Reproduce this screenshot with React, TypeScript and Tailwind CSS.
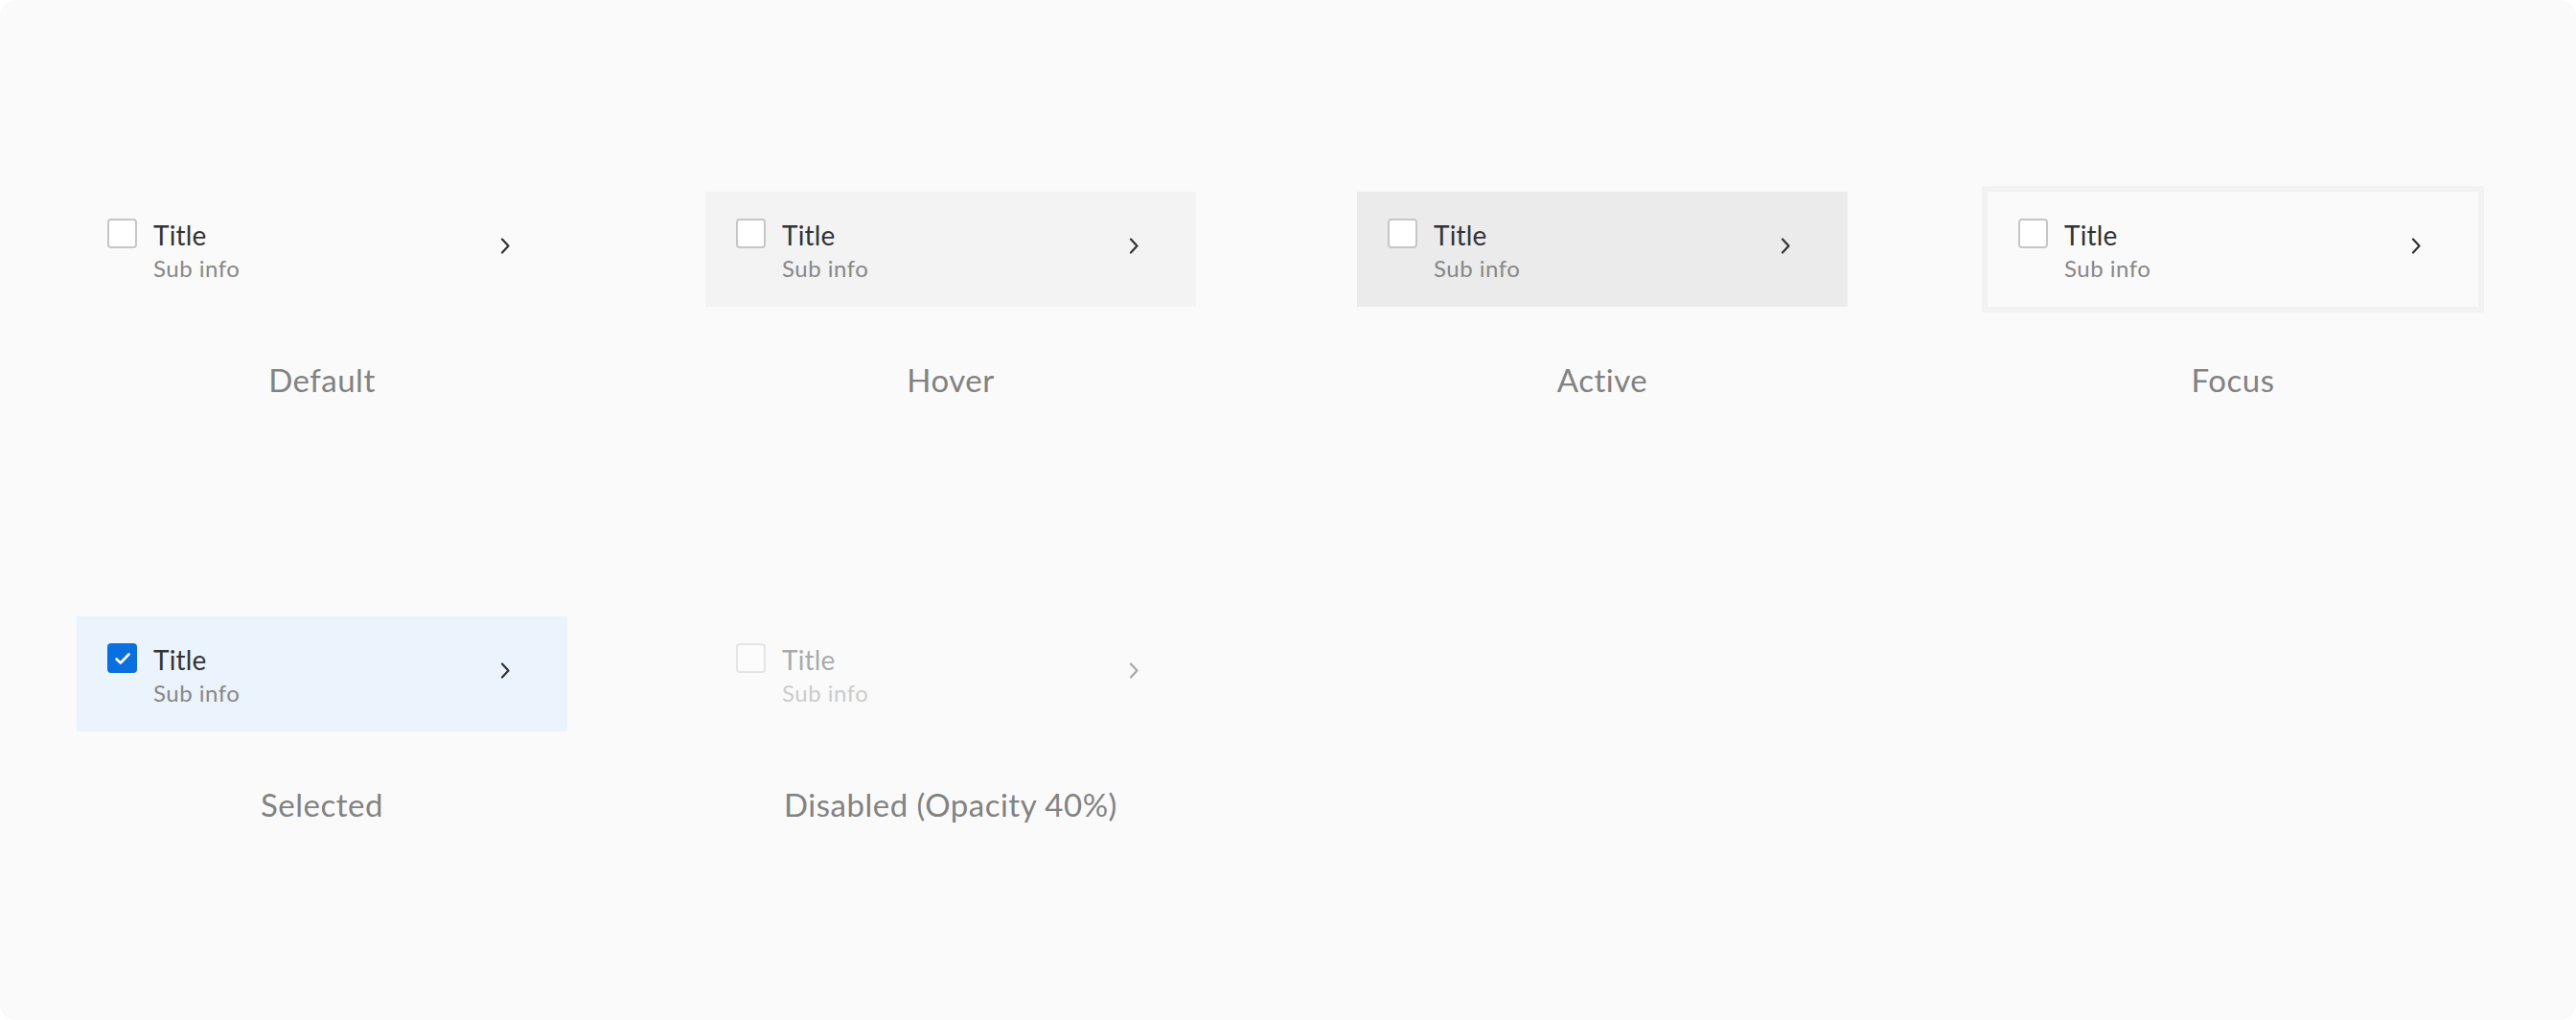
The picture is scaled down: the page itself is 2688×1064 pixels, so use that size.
import React from "react";

type Variant = "default" | "hover" | "active" | "focus" | "selected" | "disabled";

function Chevron() {
  return (
    <svg width="11" height="17" viewBox="0 0 11 17" className="mt-[20px] shrink-0" fill="none">
      <path d="M2 1.5 L8.5 8.5 L2 15.5" stroke="#333333" strokeWidth="2.2" strokeLinecap="round" strokeLinejoin="round" />
    </svg>
  );
}

function Checkbox({ checked }: { checked?: boolean }) {
  if (checked) {
    return (
      <div className="w-[31px] h-[31px] rounded-[4px] bg-[#0a6fdf] flex items-center justify-center shrink-0">
        <svg width="18" height="14" viewBox="0 0 18 14" fill="none">
          <path d="M2.5 7.5 L6.8 11.5 L15.5 2.5" stroke="#ffffff" strokeWidth="2.6" strokeLinecap="round" strokeLinejoin="round" />
        </svg>
      </div>
    );
  }
  return <div className="w-[31px] h-[31px] rounded-[4px] border-2 border-[#c6c6c6] bg-white shrink-0" />;
}

function ListItem({ variant }: { variant: Variant }) {
  const bg =
    variant === "hover"
      ? "bg-[#f3f3f3]"
      : variant === "active"
      ? "bg-[#ebebeb]"
      : variant === "selected"
      ? "bg-[#ebf3fc]"
      : variant === "focus"
      ? "bg-[#fafafa] ring-[6px] ring-[#f2f2f2]"
      : "bg-transparent";
  return (
    <div
      className={`w-[512px] h-[120px] flex items-start pt-[28px] pl-[32px] pr-[59px] ${bg} ${
        variant === "disabled" ? "opacity-40" : ""
      }`}
    >
      <Checkbox checked={variant === "selected"} />
      <div className="flex-1 flex flex-col ml-[17px]">
        <div className="text-[28px] leading-[34px] text-[#333333] tracking-[0.2px]">Title</div>
        <div className="text-[24px] leading-[30px] text-[#878787] mt-[3px] tracking-[0.5px]">Sub info</div>
      </div>
      <Chevron />
    </div>
  );
}

function Cell({ variant, label }: { variant: Variant; label: string }) {
  return (
    <div className="flex flex-col w-[512px]">
      <ListItem variant={variant} />
      <div className="mt-[56px] text-center text-[33px] leading-[40px] text-[#828282] tracking-[0.5px]">{label}</div>
    </div>
  );
}

export default function App() {
  return (
    <div
      className="w-[2688px] h-[1064px] bg-white"
      style={{ fontFamily: '"Lato", "Noto Sans", sans-serif' }}
    >
      <div className="w-full h-full rounded-[16px] bg-[#fafafa] pt-[200px] pl-[80px]">
        <div className="grid grid-cols-[656px_680px_658px_512px] gap-y-[227px]">
          <Cell variant="default" label="Default" />
          <Cell variant="hover" label="Hover" />
          <Cell variant="active" label="Active" />
          <Cell variant="focus" label="Focus" />
          <Cell variant="selected" label="Selected" />
          <Cell variant="disabled" label="Disabled (Opacity 40%)" />
        </div>
      </div>
    </div>
  );
}
